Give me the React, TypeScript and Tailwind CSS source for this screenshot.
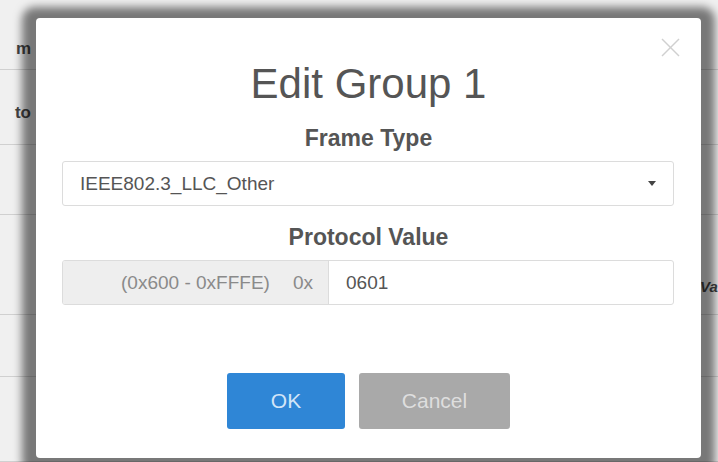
import React from 'react';

const font = { fontFamily: '"Liberation Sans", Arial, sans-serif' };

// background table rows behind the dialog (mostly hidden)
const rows = [
  { h: 'h-[70px]', left: 'm', lpos: 'mt-[28px]', right: '' },
  { h: 'h-[75px]', left: 'to', lpos: 'mt-[12px]', right: '' },
  { h: 'h-[70px]', left: '', lpos: '', right: '' },
  { h: 'h-[100px]', left: '', lpos: '', right: 'Va' },
  { h: 'h-[62px]', left: '', lpos: '', right: '' },
  { h: 'h-[85px]', left: '', lpos: '', right: '' },
];

const CloseIcon = () => (
  <svg width="19" height="19" viewBox="0 0 19 19" fill="none" stroke="#d0d0d0" strokeWidth="1.4">
    <path d="M1 1L18 18" />
    <path d="M18 1L1 18" />
  </svg>
);

const App: React.FC = () => {
  return (
    <div className="relative w-[718px] h-[462px] overflow-hidden bg-[#f0f0f0]" style={font}>
      {/* page behind the modal */}
      <div className="flex flex-col">
        {rows.map((r, i) => (
          <div key={i} className={`${r.h} flex items-center justify-between border-b border-[#d0d0d0]`}>
            <div className={`${r.lpos} w-[34px] pr-[3px] flex justify-end whitespace-nowrap text-[17px] font-bold text-[#444]`}>
              {r.left}
            </div>
            <div className="w-[18px] mt-[46px] flex justify-start whitespace-nowrap text-[15px] italic font-bold text-[#444]">
              {r.right}
            </div>
          </div>
        ))}
      </div>

      {/* dialog */}
      <div className="absolute left-[36px] top-[18px] w-[665px] h-[440px] bg-white rounded-[4px] shadow-[0_3px_8px_14px_rgba(0,0,0,0.5)] flex flex-col px-[27px] pt-[45px]">
        <button className="absolute top-[20px] right-[21px]">
          <CloseIcon />
        </button>

        <h2 className="text-center text-[42px] leading-[42px] text-[#555]">Edit Group 1</h2>

        <div className="mt-[22px] text-center text-[23px] leading-[23px] font-bold text-[#555]">Frame Type</div>

        <div className="mt-[11px] h-[45px] w-[612px] ml-[-1px] flex items-center justify-between border border-[#dcdcdc] rounded-[3px] pl-[17px] pr-[17px]">
          <span className="text-[19px] leading-[19px] text-[#555]">IEEE802.3_LLC_Other</span>
          <svg width="8" height="5" viewBox="0 0 8 5">
            <path d="M0 0H8L4 5Z" fill="#444" />
          </svg>
        </div>

        <div className="mt-[20px] text-center text-[23px] leading-[23px] font-bold text-[#555]">Protocol Value</div>

        <div className="mt-[11px] h-[45px] w-[612px] ml-[-1px] flex border border-[#dcdcdc] rounded-[3px] overflow-hidden">
          <div className="w-[266px] flex items-center justify-end gap-[23px] bg-[#eeeeee] border-r border-[#dcdcdc] pr-[15px] text-[19px] leading-[19px] text-[#8a8a8a]">
            <span>(0x600 - 0xFFFE)</span>
            <span>0x</span>
          </div>
          <div className="flex-1 flex items-center pl-[17px] text-[19px] leading-[19px] text-[#555]">0601</div>
        </div>

        <div className="mt-[68px] flex justify-center gap-[14px]">
          <button className="w-[118px] h-[56px] rounded-[3px] bg-[#2f86d6] text-[21px] text-[#d2e5f8]">OK</button>
          <button className="w-[151px] h-[56px] rounded-[3px] bg-[#a9a9a9] text-[21px] text-[#dedede]">Cancel</button>
        </div>
      </div>
    </div>
  );
};

export default App;
